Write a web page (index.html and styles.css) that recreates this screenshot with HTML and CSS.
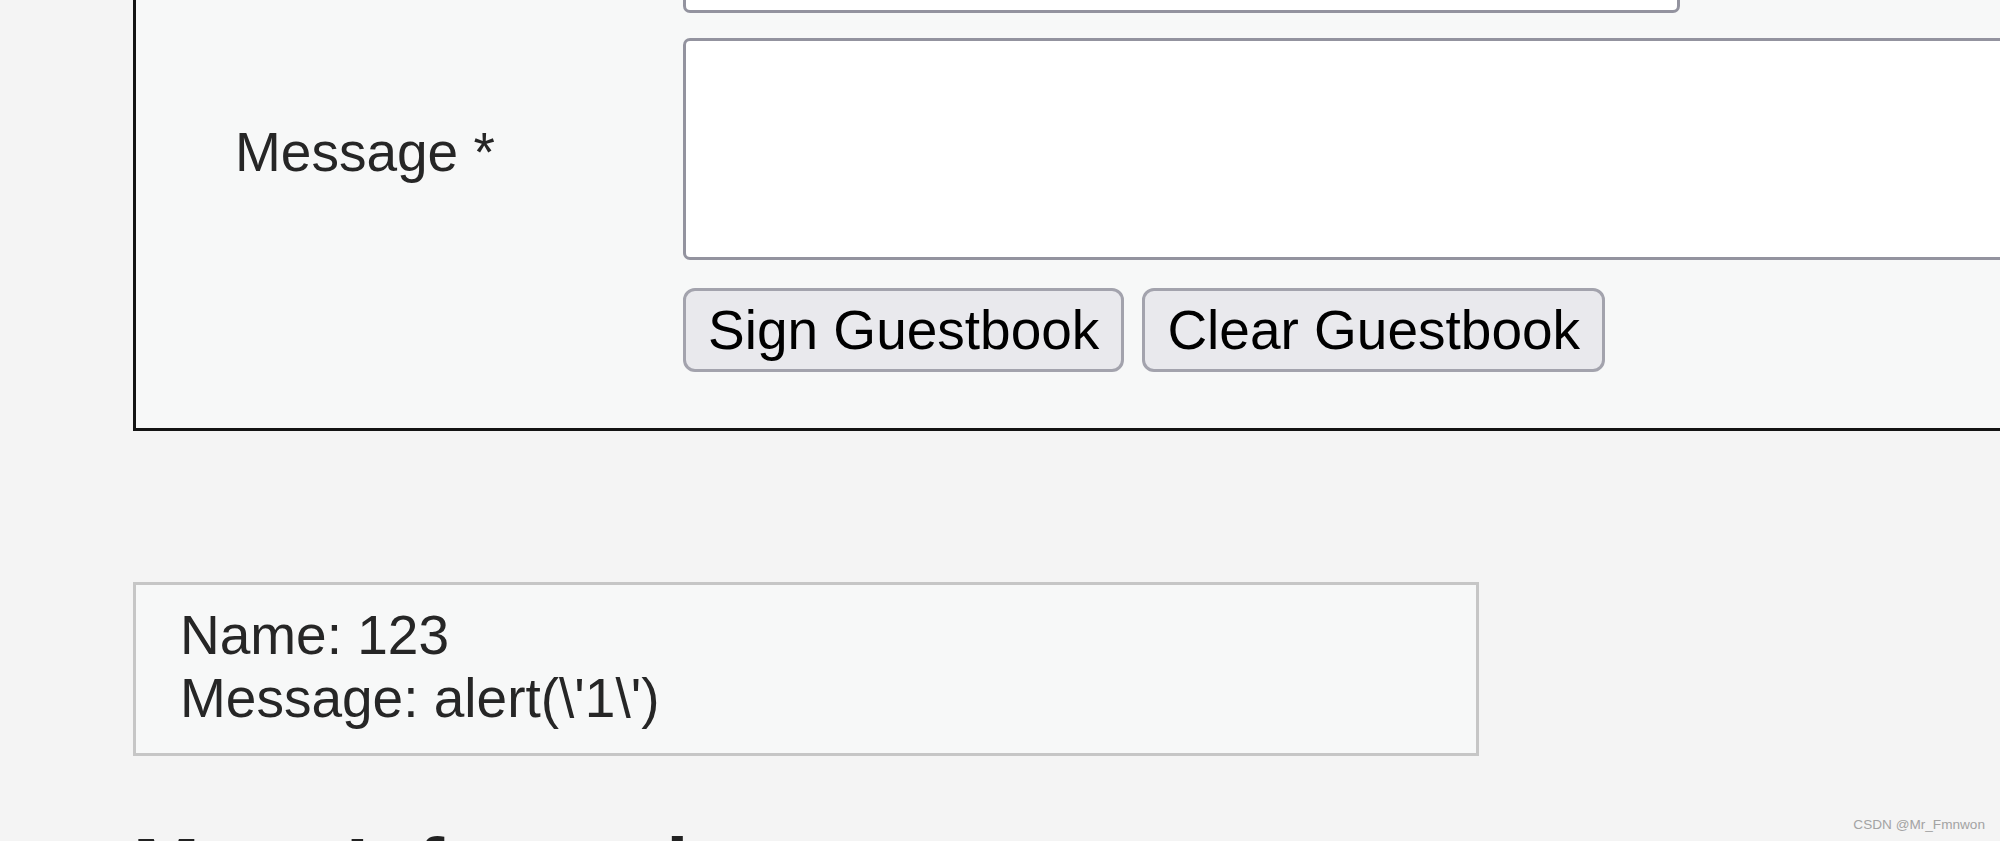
FILE: index.html
```html
<!DOCTYPE html>
<html>
<head>
<meta charset="utf-8">
<title>Guestbook</title>
<link rel="stylesheet" href="styles.css">
</head>
<body>
<div class="page">
  <div class="vuln-box">
    <form class="gb-form">
      <div class="row row-name">
        <label class="lbl">Name *</label>
        <input class="txt" type="text" name="txtName">
      </div>
      <div class="row row-msg">
        <label class="lbl lbl-msg">Message *</label>
        <textarea class="area" name="mtxMessage"></textarea>
      </div>
      <div class="row row-btns">
        <span class="lbl"></span>
        <div class="btns">
          <button type="button" class="btn btn-sign">Sign Guestbook</button>
          <button type="button" class="btn btn-clear">Clear Guestbook</button>
        </div>
      </div>
    </form>
  </div>

  <div class="comments">
    <div class="comment">Name: 123<br>Message: alert(\'1\')</div>
  </div>

  <h2 class="more">More Information</h2>
</div>
<div class="watermark">CSDN @Mr_Fmnwon</div>
</body>
</html>
```

FILE: styles.css
```css
html, body {
  margin: 0;
  padding: 0;
}
body {
  width: 2000px;
  height: 841px;
  overflow: hidden;
  background: #f4f4f4;
  font-family: "Liberation Sans", Arial, Helvetica, sans-serif;
  font-size: 55px;
  color: #262626;
  position: relative;
}
.page {
  padding-left: 133px;
}
.vuln-box {
  width: 2100px;
  margin-top: -89px;
  padding: 25px 0 56px 0;
  border: 3px solid #141414;
  background: #f7f8f8;
}
.gb-form {
  display: flex;
  flex-direction: column;
}
.row {
  display: flex;
  align-items: center;
}
.lbl {
  width: 448px;
  flex: 0 0 448px;
  padding-left: 99px;
  font-size: 55px;
  color: #262626;
}
.lbl-msg {
  padding-top: 5px;
}
.row-msg {
  margin-top: 25px;
}
.row-btns {
  margin-top: 28px;
}
.txt {
  box-sizing: border-box;
  width: 997px;
  height: 74px;
  border: 3px solid #93939f;
  border-radius: 7px;
  background: #ffffff;
  margin: 0;
  padding: 0 10px;
  font: inherit;
}
.area {
  box-sizing: border-box;
  width: 1400px;
  height: 222px;
  border: 3px solid #93939f;
  border-radius: 7px;
  background: #ffffff;
  margin: 0;
  padding: 6px;
  resize: none;
  font: inherit;
}
.btns {
  display: flex;
  gap: 18px;
}
.btn {
  box-sizing: border-box;
  height: 84px;
  padding: 0 22px;
  border: 3px solid #a3a3ad;
  border-radius: 12px;
  background: #e9e9ed;
  color: #000000;
  font-family: "Liberation Sans", Arial, Helvetica, sans-serif;
  font-size: 55px;
  margin: 0;
}
.comments {
  margin-top: 151px;
}
.comment {
  box-sizing: border-box;
  width: 1346px;
  border: 3px solid #c6c6c6;
  background: #f7f8f8;
  padding: 19px 44px 23px 44px;
  line-height: 63px;
  color: #262626;
}
.more {
  margin: 65px 0 0 0;
  font-size: 80px;
  font-weight: bold;
  color: #222222;
  line-height: normal;
}
.watermark {
  position: absolute;
  right: 15px;
  bottom: 9px;
  font-family: "Liberation Sans", Arial, sans-serif;
  font-size: 13.6px;
  color: #a3a3a3;
}
```
